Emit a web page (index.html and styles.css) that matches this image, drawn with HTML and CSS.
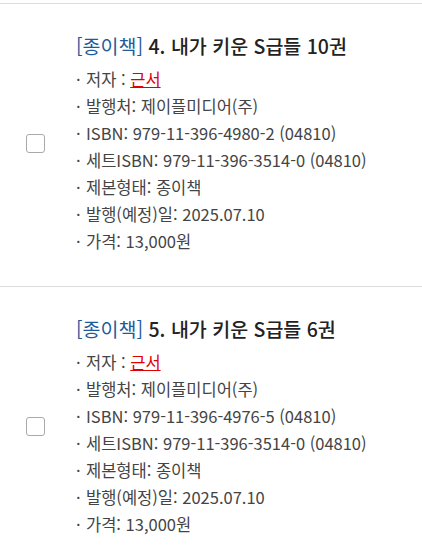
FILE: index.html
```html
<!DOCTYPE html>
<html lang="ko">
<head>
<meta charset="utf-8">
<link rel="stylesheet" href="styles.css">
</head>
<body>
<div class="list">
  <div class="item">
    <div class="check"><span class="box"></span></div>
    <div class="info">
      <div class="title"><span class="type">[종이책]</span> 4. 내가 키운 S급들 10권</div>
      <ul class="meta">
        <li>저자 : <a class="author" href="#">근서</a></li>
        <li>발행처: 제이플미디어(주)</li>
        <li>ISBN: 979-11-396-4980-2 (04810)</li>
        <li>세트ISBN: 979-11-396-3514-0 (04810)</li>
        <li>제본형태: 종이책</li>
        <li>발행(예정)일: 2025.07.10</li>
        <li>가격: 13,000원</li>
      </ul>
    </div>
  </div>
  <div class="item">
    <div class="check"><span class="box"></span></div>
    <div class="info">
      <div class="title"><span class="type">[종이책]</span> 5. 내가 키운 S급들 6권</div>
      <ul class="meta">
        <li>저자 : <a class="author" href="#">근서</a></li>
        <li>발행처: 제이플미디어(주)</li>
        <li>ISBN: 979-11-396-4976-5 (04810)</li>
        <li>세트ISBN: 979-11-396-3514-0 (04810)</li>
        <li>제본형태: 종이책</li>
        <li>발행(예정)일: 2025.07.10</li>
        <li>가격: 13,000원</li>
      </ul>
    </div>
  </div>
</div>
</body>
</html>
```
FILE: styles.css
```css
html, body {
  margin: 0;
  padding: 0;
  background: #fff;
}
body {
  font-family: "Noto Sans CJK KR", "Noto Sans", sans-serif;
  color: #444;
}
.list {
  margin-top: 3px;
}
.item {
  display: flex;
  align-items: center;
  border-top: 1px solid #dddddd;
  padding: 29px 0 31px 0;
}
.check {
  width: 76px;
  padding-left: 26px;
  box-sizing: border-box;
  display: flex;
  align-items: center;
}
.box {
  display: block;
  width: 19px;
  height: 19px;
  box-sizing: border-box;
  border: 1px solid #a9a9a9;
  border-radius: 3px;
  background: #fff;
  margin-top: -2px;
}
.info {
  flex: 1;
}
.title {
  font-size: 19.5px;
  line-height: 26px;
  font-weight: 500;
  color: #222;
  margin-bottom: 7px;
}
.type {
  color: #1d5c9c;
  font-weight: 400;
}
.meta {
  list-style: none;
  margin: 0;
  padding: 0;
}
.meta li {
  font-size: 16.5px;
  line-height: 27px;
  color: #444;
}
.meta li::before {
  content: "·";
  display: inline-block;
  width: 10px;
  color: #444;
}
.author {
  color: #e00000;
  text-decoration: underline;
}
```
